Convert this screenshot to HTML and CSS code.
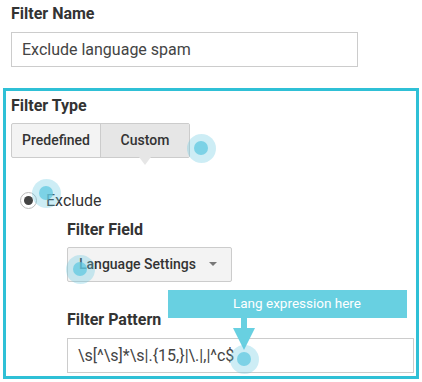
FILE: index.html
```html
<!DOCTYPE html>
<html lang="en">
<head>
  <meta charset="UTF-8" />
  <title>Filter settings</title>
  <link rel="stylesheet" href="styles.css">
</head>
<body>
  <div class="page">
    <div class="group">
      <div class="label">Filter Name</div>
      <div class="field name-field">Exclude language spam</div>
    </div>

    <div class="panel">
      <div class="label">Filter Type</div>
      <div class="segmented">
        <span class="seg">Predefined</span>
        <span class="seg active">Custom</span>
      </div>

      <div class="radio-row">
        <span class="radio"></span>
        <span>Exclude</span>
      </div>

      <div class="sub">
        <div class="label field-label">Filter Field</div>
        <div class="select">
          <span>Language Settings</span>
          <span class="caret"></span>
        </div>

        <div class="label pattern-label">Filter Pattern</div>
        <div class="field pattern-field">\s[^\s]*\s|.{15,}|\.|,|^c$</div>
      </div>
    </div>

    <!-- annotation overlays -->
    <div class="tip">Lang expression here</div>
    <div class="tip-arrow"></div>
    <span class="dot dot-custom"></span>
    <span class="dot dot-exclude"></span>
    <span class="dot dot-select"></span>
    <span class="dot dot-pattern"></span>
  </div>
</body>
</html>
```

FILE: styles.css
```css
:root {
  --text: #333333;
  --input-text: #444444;
  --border: #cccccc;
  --teal: #2fc0d6;
  --tip: #68d0e1;
}

* {
  box-sizing: border-box;
  margin: 0;
  padding: 0;
}

body {
  font-family: Roboto, 'Liberation Sans', sans-serif;
  background: #ffffff;
  color: var(--text);
}

.page {
  position: relative;
  width: 422px;
  height: 382px;
  overflow: hidden;
}

.group {
  padding: 5px 0 0 11px;
}

.label {
  font-size: 16px;
  font-weight: 700;
  line-height: 18px;
  color: var(--text);
}

.field {
  height: 35px;
  border: 1px solid var(--border);
  background: #fff;
  font-size: 16px;
  line-height: 33px;
  color: var(--input-text);
  padding-left: 10px;
  white-space: nowrap;
}

.name-field {
  width: 347px;
  margin-top: 9px;
}

.panel {
  width: 416px;
  height: 291px;
  margin: 21px 0 0 3px;
  border: 3px solid var(--teal);
  padding: 5.6px 0 3px 5px;
}

.segmented {
  display: flex;
  width: 179px;
  height: 35px;
  margin-top: 8.4px;
  border: 1px solid var(--border);
  border-radius: 2px;
  background: #f3f3f3;
}

.seg {
  flex: 1;
  display: flex;
  align-items: center;
  justify-content: center;
  font-size: 14px;
  font-weight: 500;
  color: var(--text);
}

.seg.active {
  position: relative;
  background: #e6e6e6;
  border-left: 1px solid var(--border);
}

.seg.active::after {
  content: '';
  position: absolute;
  left: 50%;
  bottom: -8px;
  margin-left: -6px;
  border-left: 6px solid transparent;
  border-right: 6px solid transparent;
  border-top: 8px solid #e6e6e6;
}

.radio-row {
  display: flex;
  align-items: center;
  gap: 9px;
  height: 24px;
  margin: 30.5px 0 0 9px;
  font-size: 16px;
  color: var(--text);
}

.radio {
  width: 17px;
  height: 17px;
  border: 1px solid #bbbbbb;
  border-radius: 50%;
  display: flex;
  align-items: center;
  justify-content: center;
}

.radio::before {
  content: '';
  width: 9px;
  height: 9px;
  border-radius: 50%;
  background: #444;
}

.sub {
  margin-left: 56px;
}

.field-label {
  margin-top: 9px;
}

.select {
  display: flex;
  align-items: center;
  justify-content: space-between;
  width: 165px;
  height: 35px;
  margin-top: 7.4px;
  padding: 0 14px 0 11px;
  border: 1px solid var(--border);
  border-radius: 2px;
  background: #f3f3f3;
  font-size: 14px;
  font-weight: 500;
  color: var(--text);
}

.caret {
  border-left: 4px solid transparent;
  border-right: 4px solid transparent;
  border-top: 4px solid #777;
}

.pattern-label {
  margin-top: 29.6px;
}

.pattern-field {
  width: 347px;
  margin-top: 8.4px;
}

/* overlays */
.tip {
  position: absolute;
  left: 168px;
  top: 290px;
  width: 239px;
  height: 28px;
  padding-left: 65px;
  background: var(--tip);
  color: #fff;
  font-size: 13.5px;
  line-height: 26px;
}

.tip-arrow {
  position: absolute;
  left: 241px;
  top: 318px;
  width: 6px;
  height: 11px;
  background: var(--tip);
}

.tip-arrow::after {
  content: '';
  position: absolute;
  left: -8px;
  top: 10px;
  border-left: 11px solid transparent;
  border-right: 11px solid transparent;
  border-top: 22px solid var(--tip);
}

.dot {
  position: absolute;
  width: 29px;
  height: 29px;
  margin: -14.5px 0 0 -14.5px;
  border-radius: 50%;
  background: rgba(104, 200, 224, 0.33);
  display: flex;
  align-items: center;
  justify-content: center;
}

.dot::before {
  content: '';
  width: 14px;
  height: 14px;
  border-radius: 50%;
  background: rgba(96, 200, 224, 0.75);
}

.dot-custom { left: 201px; top: 148px; }
.dot-exclude { left: 46px; top: 193px; }
.dot-select { left: 80px; top: 269px; }
.dot-pattern { left: 244px; top: 359px; }
```
